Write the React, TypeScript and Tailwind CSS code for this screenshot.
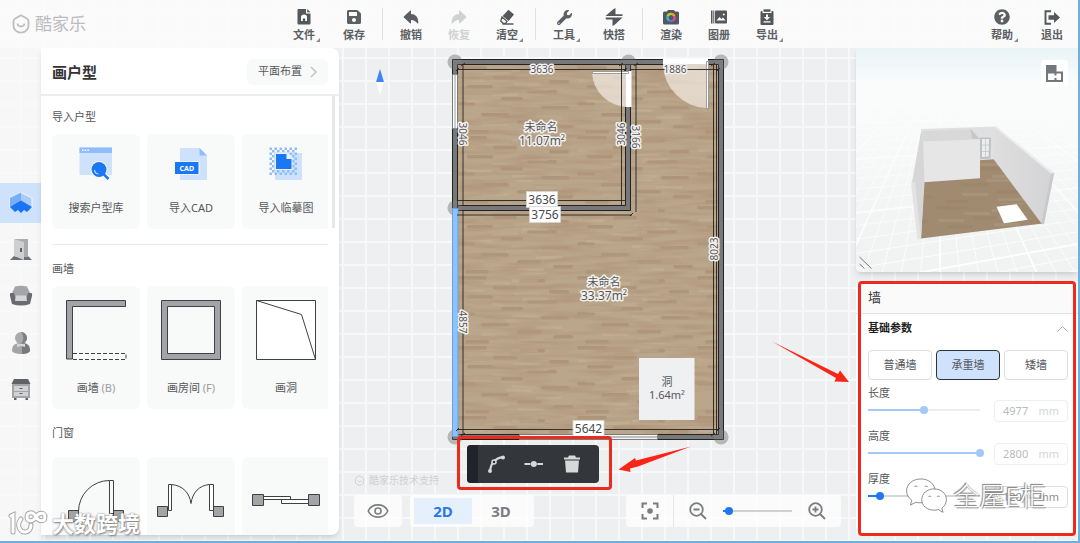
import React, { useState } from 'react';
import { FaSave, FaWrench, FaQuestionCircle } from 'react-icons/fa';
import { IoArrowRedo, IoArrowUndo } from 'react-icons/io5';

const dark = '#54575b';

interface ToolProps {
	label: string;
	icon: React.ReactNode;
	menu?: boolean;
	disabled?: boolean;
}

const ToolButton = ({ label, icon, menu, disabled }: ToolProps) => {
	return (
		<button
			type="button"
			disabled={disabled}
			className="relative flex h-12 w-12 flex-col items-center pt-2 text-[#5c5f63] disabled:text-[#d0d1d3]"
		>
			<span className="flex h-[18px] items-center justify-center">{icon}</span>
			<span className="mt-px text-[11px] leading-[16px] font-semibold">{label}</span>
			{menu && (
				<svg className="absolute right-2 bottom-1.5" width="4" height="4" viewBox="0 0 4 4">
					<path d="M4 0v4H0z" fill="#8b8d90" />
				</svg>
			)}
		</button>
	);
};

const Separator = () => <span className="mx-1 h-8 w-px bg-[#dfe0e2]" />;

const FileIcon = () => (
	<svg width="14" height="16" viewBox="0 0 14 16">
		<path d="M1.500 0H9v4.500h4.500V14.500a1 1 0 0 1-1 1h-11a1 1 0 0 1-1-1V1a1 1 0 0 1 1-1z" fill={dark} />
		<path d="M10.200 0l3.300 3.300h-3.300z" fill={dark} />
		<path d="M4 12V8.500a3 3 0 0 1 6 0V12H8.200V9.500H5.800V12z" fill="#fff" />
	</svg>
);

const EraserIcon = () => (
	<svg width="17" height="17" viewBox="0 0 17 17">
		<path d="M9.500 .8l5.500 4.800-5.400 6.400-6-5z" fill={dark} />
		<path d="M3 8l5 4.300-1.500 2H4L1.800 12z" fill="none" stroke={dark} strokeWidth="1.300" />
		<path d="M3.500 15h11" stroke={dark} strokeWidth="1.500" />
	</svg>
);

const QuickIcon = () => (
	<svg width="18" height="18" viewBox="0 0 18 18" fill={dark}>
		<path d="M10.500 0v6.300h7L17.500 8H.5L8 1.500z" />
		<path d="M.5 9.500h17L10 16.500 7.500 18v-6.500H1z" />
	</svg>
);

const RenderIcon = () => (
	<svg width="16" height="15" viewBox="0 0 16 15">
		<path d="M4 1.500L5 0h6l1 1.500h2.500a1.500 1.500 0 0 1 1.500 1.500v10a1.500 1.500 0 0 1-1.500 1.500h-13A1.500 1.500 0 0 1 0 13V3a1.500 1.500 0 0 1 1.500-1.500z" fill={dark} />
		<g fill="none" strokeWidth="2.200">
			<path d="M8 3.900a3.600 3.600 0 0 1 3.400 2.400" stroke="#f0a030" />
			<path d="M11.400 6.300a3.600 3.600 0 0 1-1.200 4.100" stroke="#e84a8a" />
			<path d="M10.200 10.400a3.600 3.600 0 0 1-4.300 0" stroke="#6a6af0" />
			<path d="M5.900 10.400a3.600 3.600 0 0 1-1.300-4" stroke="#2cc3d8" />
			<path d="M4.600 6.400A3.600 3.600 0 0 1 8 3.900" stroke="#a5d838" />
		</g>
	</svg>
);

const AlbumIcon = () => (
	<svg width="16" height="14" viewBox="0 0 16 14">
		<path d="M0 .5h1.500v13H0zM2.300.5h1v13h-1z" fill={dark} />
		<rect x="4" y=".5" width="12" height="13" rx="1" fill={dark} />
		<path d="M5.500 10.500l3-3.500 2 2 1.500-1.500 2.500 3z" fill="#fff" />
		<circle cx="12.800" cy="4.500" r="1" fill="#fff" />
	</svg>
);

const ExportIcon = () => (
	<svg width="14" height="16" viewBox="0 0 14 16">
		<rect x=".5" y="2" width="13" height="14" rx="1" fill={dark} />
		<rect x="2.500" y="0" width="9" height="4" fill="#fff" />
		<rect x="3.500" y=".3" width="7" height="2.500" fill={dark} />
		<path d="M6 5.500h2V8h2.300L7 11.200 3.700 8H6zM3.500 12.300h7v1.200h-7z" fill="#fff" />
	</svg>
);

const ExitIcon = () => (
	<svg width="16" height="15" viewBox="0 0 16 15">
		<path d="M7 1.200H1.500v12.600H7" fill="none" stroke={dark} strokeWidth="1.900" />
		<path d="M4.500 5.300H10V2l6 5.500-6 5.500V9.700H4.500z" fill={dark} />
	</svg>
);

const LogoMark = ({ size }: { size: number }) => (
	<svg width={size} height={size} viewBox="0 0 20 20" fill="none" stroke="currentColor" strokeWidth="1.800">
		<path d="M10 1.300l5.800 3.200a3 3 0 0 1 1.700 2.700v4.600c0 3.800-3.600 6.900-7.500 6.900s-7.500-3.100-7.500-6.900V7.200a3 3 0 0 1 1.700-2.700z" />
		<path d="M6.500 9.500c.5 4 6.500 4 7 0" />
	</svg>
);

const Header = () => {
	return (
		<header className="flex h-12 shrink-0 items-center bg-[#fbfbfb]/85 pr-0.5">
			<div className="flex w-[280px] shrink-0 items-center gap-1 pl-[11px] text-[#bcbdbf]">
				<LogoMark size={20} />
				<span className="text-[17px] leading-[24px]">酷家乐</span>
			</div>
			<nav className="flex items-center">
				<ToolButton label="文件" icon={<FileIcon />} menu />
				<span className="w-0.5" />
				<ToolButton label="保存" icon={<FaSave size={16} />} />
				<Separator />
				<ToolButton label="撤销" icon={<IoArrowUndo size={18} />} />
				<ToolButton label="恢复" icon={<IoArrowRedo size={18} />} disabled />
				<ToolButton label="清空" icon={<EraserIcon />} menu />
				<Separator />
				<ToolButton label="工具" icon={<FaWrench size={15} />} menu />
				<span className="w-0.5" />
				<ToolButton label="快搭" icon={<QuickIcon />} />
				<Separator />
				<ToolButton label="渲染" icon={<RenderIcon />} />
				<ToolButton label="图册" icon={<AlbumIcon />} />
				<ToolButton label="导出" icon={<ExportIcon />} menu />
			</nav>
			<nav className="ml-auto flex items-center gap-0.5">
				<ToolButton label="帮助" icon={<FaQuestionCircle size={16} />} menu />
				<ToolButton label="退出" icon={<ExitIcon />} />
			</nav>
		</header>
	);
};

const railIcons = [
	{
		name: '户型',
		art: (
			<>
				<path d="M12 1.500L23 7v10L12 11.500 1 17V7z" fill="#a9cbfa" stroke="#eef5ff" strokeWidth="1" />
				<path d="M12 1.500L1 7v9.500l11-6z" fill="#79aef7" />
				<path d="M12 9.500l11 6.500-5 5-3-2-3 3-3-3-3 2-5-5z" fill="#1b74f2" />
			</>
		),
	},
	{
		name: '门',
		art: (
			<>
				<path d="M1 22l4-4h14l4 4z" fill="#6d6f72" />
				<path d="M6 1h13v18H6z" fill="#a9abad" />
				<path d="M5 1l10 3v18L5 18z" fill="#cdcfd1" />
				<path d="M11 10h2v4h-2z" fill="#5f6164" />
			</>
		),
	},
	{
		name: '家具',
		art: (
			<>
				<path d="M6 2.500Q12 1 18 2.500L21 9H3z" fill="#a3a5a8" />
				<path d="M5 8h14v10H5z" fill="#a3a5a8" />
				<path d="M1.500 9H5l2 8h10l2-8h3.500q1 1 .5 3l-2 8q-9 3-18 0l-2-8q-.5-2 .5-3z" fill="#696b6f" />
				<path d="M7 11.500h10l1 5.500H6z" fill="#d3d5d7" />
			</>
		),
	},
	{
		name: '人物',
		art: (
			<>
				<path d="M3 20c0-6 3-8 9-8s9 2 9 8c-2 4-16 4-18 0z" fill="#a3a5a8" />
				<path d="M13 12c6 0 8 3 8 8-1 2-4 3-8 3z" fill="#77797c" />
				<circle cx="12" cy="7" r="6" fill="#a9abad" />
				<path d="M12 1a6 6 0 0 1 0 12c3-4 3-8 0-12z" fill="#7d7f82" />
				<path d="M8 13h8v3l-4-1-4 1z" fill="#d3d5d7" />
			</>
		),
	},
	{
		name: '柜子',
		art: (
			<>
				<path d="M5 2h14l2.500 5h-19z" fill="#606266" />
				<path d="M3 7h18v14H3z" fill="#a3a5a8" />
				<path d="M5 9h14v5H5zM5 15h14v4H5z" fill="#d0d2d4" />
				<path d="M10.500 11h3v1h-3zM10.500 16h3v1h-3zM5 21h2.500v2H5zM16.500 21H19v2h-2.500z" fill="#606266" />
			</>
		),
	},
];

const Rail = () => {
	return (
		<aside className="w-[41px] shrink-0 bg-[#f9f9fa]/80 pt-[135px]">
			<div className="flex h-[226px] flex-col justify-between">
				{railIcons.map(({ name, art }, index) => (
					<button
						key={name}
						type="button"
						aria-label={name}
						className={
							index === 0
								? 'flex h-10 items-center justify-center bg-[#cfe2fc]'
								: 'flex h-10 items-center justify-center'
						}
					>
						<svg width="24" height="24" viewBox="0 0 24 24">
							{art}
						</svg>
					</button>
				))}
			</div>
		</aside>
	);
};

interface CardProps {
	label: string;
	hint?: string;
	tall?: boolean;
	hideLabel?: boolean;
	viewBox: string;
	children: React.ReactNode;
}

const Card = ({ label, hint, tall, hideLabel, viewBox, children }: CardProps) => {
	return (
		<button
			type="button"
			aria-label={label}
			className={
				tall
					? 'flex h-[123px] w-[88px] shrink-0 flex-col items-center rounded-md bg-[#f8f9f9] pt-2.5'
					: 'flex h-[95px] w-[88px] shrink-0 flex-col items-center rounded-md bg-[#f8f9f9] pt-2'
			}
		>
			<svg viewBox={viewBox} className={tall ? 'h-[68px] w-[88px]' : 'size-11'}>
				{children}
			</svg>
			{!hideLabel && (
				<span className={tall ? 'mt-4 text-[11px] leading-[16px]' : 'mt-[14px] text-[11px] leading-[16px]'}>
					{label}
					{hint && <span className="text-[#9a9c9f]"> ({hint})</span>}
				</span>
			)}
		</button>
	);
};

const checker = Array.from({ length: 11 }).flatMap((_, row) =>
	Array.from({ length: 11 })
		.map((_, col) => ({ row, col }))
		.filter(({ row, col }) => (row + col) % 2 === 0)
);

const SidePanel = () => {
	const wall = { fill: '#a3a4a8', stroke: '#3f4144', strokeWidth: 1 };
	const outline = { fill: 'none', stroke: '#3f4144', strokeWidth: 1 };

	return (
		<section className="mb-1.5 flex w-[298px] shrink-0 flex-col overflow-hidden rounded-r-lg bg-white text-[#55575a] shadow-md">
			<div className="flex h-12 shrink-0 items-center justify-between border-b-2 border-[#eceded] pt-px pr-[11px] pl-[11px]">
				<h1 className="text-[15px] leading-[22px] font-bold text-[#333]">画户型</h1>
				<button
					type="button"
					className="flex h-[26px] items-center gap-2 rounded-md bg-[#f8f9f9] px-[11px] text-[11px]"
				>
					平面布置
					<svg width="7" height="12" viewBox="0 0 7 12" fill="none" stroke="#c3c4c6" strokeWidth="1.500">
						<path d="M1 1l5 5-5 5" />
					</svg>
				</button>
			</div>
			<div className="relative min-h-0 flex-1 overflow-hidden px-[11px] pt-[13px]">
				<span className="absolute top-0 right-1 h-33 w-[3px] bg-[#e6e8e8]" />
				<h2 className="text-[11px] leading-[16px]">导入户型</h2>
				<div className="mt-[9px] flex gap-[7px] overflow-hidden">
					<Card label="搜索户型库" viewBox="74 142 44 44">
						<rect x="79.500" y="147.500" width="32.500" height="27.500" rx="1" fill="#cfe2fd" />
						<path d="M79.500 147.500H112v5.500H79.500z" fill="#8fbdf9" />
						<path d="M82 149.500h1.500v1.500H82zm2.700 0h1.500v1.500h-1.500zm2.700 0h1.500v1.500h-1.500z" fill="#fff" />
						<path d="M103 173l5.500 6" stroke="#f8f9f9" strokeWidth="5" />
						<circle cx="99" cy="169.500" r="8.500" fill="#f8f9f9" />
						<circle cx="99" cy="169.500" r="7.500" fill="#1a78f5" />
						<path d="M103 173.500l5.500 5.500" stroke="#1a78f5" strokeWidth="2.500" />
						<path d="M94.500 170a4.500 4.500 0 0 0 4 4" fill="none" stroke="#cfe2fd" strokeWidth="1.200" />
					</Card>
					<Card label="导入CAD" viewBox="169 142 44 44">
						<path d="M180 148h19.500l7.500 7.500V180h-27z" fill="#cfe2fd" />
						<path d="M199.500 148v7.500h7.500z" fill="#8fbdf9" />
						<rect x="174.500" y="161.500" width="25" height="13" fill="#fff" />
						<rect x="175" y="162" width="23.500" height="12" fill="#1a78f5" />
						<text x="186.800" y="170.700" textAnchor="middle" fontSize="7" fontWeight="700" fill="#fff">
							CAD
						</text>
					</Card>
					<Card label="导入临摹图" viewBox="264 142 44 44">
						<path d="M275 153h27v27h-27z" fill="#cfe2fd" />
						{checker.map(({ row, col }) => (
							<rect key={`${row}-${col}`} x={269.5 + col * 2.5} y={147.5 + row * 2.5} width="2.500" height="2.500" fill="#8fbdf9" />
						))}
						<path d="M275 152.500h13l4.500 4.500v13H275z" fill="#e6f0fe" />
						<path d="M276 154h10.500v5h5v10H276z" fill="#1a78f5" />
					</Card>
				</div>
				<hr className="mt-[15px] border-[#e9eaea]" />
				<h2 className="mt-4 text-[11px] leading-[16px]">画墙</h2>
				<div className="mt-[9px] flex gap-[7px] overflow-hidden">
					<Card label="画墙" hint="B" tall viewBox="52 296 88 68">
						<path d="M66.500 300.500h59v6h-53v52.500h-6z" {...wall} />
						<path d="M73 353.500h53v6H73" {...outline} strokeDasharray="4 2" />
					</Card>
					<Card label="画房间" hint="F" tall viewBox="147 296 88 68">
						<path d="M161.500 300.500h59v59h-59z" {...wall} />
						<path d="M167.500 306.500h47v47h-47z" fill="#f8f9f9" stroke="#3f4144" />
					</Card>
					<Card label="画洞" tall viewBox="242 296 88 68">
						<path d="M256.500 300.500h59v59h-59z" fill="#fff" stroke="#3f4144" />
						<path d="M256.500 300.500l45 14 14 45" {...outline} />
					</Card>
				</div>
				<h2 className="mt-4 text-[11px] leading-[16px]">门窗</h2>
				<div className="mt-4 flex gap-[7px] overflow-hidden">
					<Card label="单开门" hideLabel tall viewBox="52 468 88 68">
						<path d="M68.500 511.500h10v11h-10zM113.500 511.500h10v11h-10z" {...wall} />
						<path d="M109.500 481.500h4v33h-4zM109.500 481.500a31 31 0 0 0-31 31" {...outline} />
					</Card>
					<Card label="双开门" hideLabel tall viewBox="147 468 88 68">
						<path d="M157.500 507.500h10v10h-10zM213.500 507.500h10v10h-10z" {...wall} />
						<path d="M168.500 485.500h3v26h-3zM209.500 485.500h4v26h-4z" fill="#fff" stroke="#3f4144" />
						<path d="M171.500 485.500c11 1 18 8 19.500 19 1.500-11 8-18 18.500-19" {...outline} />
					</Card>
					<Card label="推拉门" hideLabel tall viewBox="242 468 88 68">
						<path d="M263.500 497.500h27v3h-27zM281.500 500.500h28v4h-28z" fill="#fff" stroke="#3f4144" />
						<path d="M252.500 495.500h11v11h-11zM308.500 495.500h11v11h-11z" {...wall} />
					</Card>
				</div>
			</div>
		</section>
	);
};

const planks = [
	[0, 2, 30],
	[62, 5, 26],
	[36, 12, 24],
	[92, 16, 20],
	[10, 21, 26],
	[70, 26, 30],
	[44, 33, 22],
	[0, 38, 18],
	[84, 42, 28],
	[24, 49, 28],
	[60, 56, 24],
	[96, 61, 20],
	[8, 66, 24],
];

const halo = {
	stroke: '#f3f1ee',
	strokeWidth: 3,
	paintOrder: 'stroke',
	fill: '#55575a',
	textAnchor: 'middle' as const,
	strokeLinejoin: 'round' as const,
};

const nodes = [
	[455, 62],
	[628.5, 62],
	[721, 62],
	[455, 208],
	[455, 437],
	[721, 437],
];

const verticalDims = [
	{ x: 463, y: 134, value: '3046', turn: 90 },
	{ x: 621, y: 134, value: '3046', turn: -90 },
	{ x: 636, y: 137, value: '3166', turn: 90 },
	{ x: 714, y: 249, value: '8023', turn: -90 },
	{ x: 463, y: 322, value: '4857', turn: 90 },
];

const FloorPlan = () => {
	return (
		<svg className="absolute inset-0 h-full w-full" viewBox="339 48 517 493">
			<defs>
				<pattern id="planks" x="457" y="64" width="120" height="70" patternUnits="userSpaceOnUse">
					{planks.map(([x, y, w]) => (
						<rect key={`${x}-${y}`} x={x} y={y} width={w} height="3.500" rx="1.500" fill="#8a5f42" opacity=".26" />
					))}
					{planks.map(([x, y]) => (
						<rect key={`${x}-${y}`} x={(x + 55) % 90} y={y + 3} width="26" height="3" fill="#c9b89c" opacity=".35" />
					))}
				</pattern>
				<filter id="grain" x="0" y="0" width="100%" height="100%">
					<feTurbulence type="fractalNoise" baseFrequency="0.022 0.2" numOctaves="2" seed="4" />
					<feColorMatrix values="0 0 0 0 0.44  0 0 0 0 0.31  0 0 0 0 0.2  2.200 0 0 0 -0.850" />
				</filter>
			</defs>

			{nodes.map(([cx, cy]) => (
				<circle key={`${cx}-${cy}`} cx={cx} cy={cy} r="7.500" fill="#c6c7c9" />
			))}

			<rect x="457" y="64" width="262" height="371" fill="#baa68b" />
			<rect x="457" y="64" width="262" height="371" fill="url(#planks)" />
			<rect x="457" y="64" width="262" height="371" filter="url(#grain)" />

			{/* walls */}
			<g fill="#77787a" stroke="#222" strokeWidth="1">
				<path d="M452.500 59.500h271v380h-271zM457.500 64.500v370h261v-370z" fillRule="evenodd" />
				<path d="M457.500 205.500h168v-141h5v146h-173z" />
			</g>
			{nodes.map(([cx, cy]) => (
				<circle key={`${cx}-${cy}`} cx={cx} cy={cy} r="7.500" fill="#888" opacity=".25" />
			))}

			{/* doors and windows */}
			<path d="M592 72a36 36 0 0 0 36 35V72z" fill="#f4ece4" opacity=".7" />
			<path d="M663 64a45 45 0 0 0 44 44V64z" fill="#f4ece4" opacity=".7" />
			<path d="M625.500 71h6v36h-6zM663 59h45v5.500h-45z" fill="#fff" />
			<path d="M592.500 71.500h36v2h-36zM706.500 61.500h2v47h-2z" fill="#fff" stroke="#8a8b8d" strokeWidth=".8" />
			<rect x="452.500" y="74.500" width="5" height="54" fill="#fff" stroke="#777" strokeWidth=".8" />
			<path d="M455 74v55" stroke="#999" />
			<rect x="519.500" y="434.500" width="138" height="5" fill="#f5f5f5" stroke="#777" strokeWidth=".8" />
			<path d="M519 437h138" stroke="#888" />
			<rect x="452.500" y="208.500" width="5.500" height="228" fill="#8ec2fd" stroke="#64a2ea" />

			{/* dimension lines */}
			<g fill="none" stroke="#222" strokeWidth=".9">
				<path d="M457 69.500h169M463 64v141M457 200.500h169M621.500 64v141" />
				<path d="M631 69.500h88M636 64v148M457 215h175M463 210v225M713.500 64v371M457 429.500h262M716.500 64v371" />
				<path d="M456 71l3-3M461 66l4-3M619 66l4-3M624 71l3-3M634 66l4-3M711 66l4-3M717 71l3-3M630 216l3-3M456 431l3-3M717 431l3-3M711 436l4-3M461 436l4-3" />
			</g>

			<rect x="639" y="358" width="55.500" height="62" fill="#eff0f2" />

			<g fontSize="10">
				<text x="542" y="73" {...halo}>
					3636
				</text>
				<text x="675" y="73" {...halo}>
					1886
				</text>
				{verticalDims.map(({ x, y, value, turn }) => (
					<text key={`${x}-${y}`} transform={`translate(${x} ${y}) rotate(${turn})`} y="4" {...halo}>
						{value}
					</text>
				))}
			</g>
			<text x="541" y="131" fontSize="11" {...halo}>
				未命名
			</text>
			<text x="542" y="145" fontSize="12" {...halo}>
				11.07m²
			</text>
			<text x="604" y="286" fontSize="11" {...halo}>
				未命名
			</text>
			<text x="604" y="300" fontSize="12" {...halo}>
				33.37m²
			</text>
			<g fill="#55575a" textAnchor="middle">
				<text x="667" y="386" fontSize="11">
					洞
				</text>
				<text x="667" y="399" fontSize="11">
					1.64m²
				</text>
			</g>

			{[
				{ x: 542, y: 200, value: '3636' },
				{ x: 545, y: 215, value: '3756' },
				{ x: 588.5, y: 429, value: '5642' },
			].map(({ x, y, value }) => (
				<g key={value}>
					<rect x={x - 15.5} y={y - 8.5} width="31" height="16" fill="#fff" stroke="#d5d5d5" strokeWidth=".8" />
					<text x={x} y={y + 4} fontSize="12" textAnchor="middle" fill="#4a4c4f">
						{value}
					</text>
				</g>
			))}

			{/* compass */}
			<path d="M380 69l4 13h-8z" fill="#3e86f5" />
			<path d="M376 82h8l-4 13z" fill="#fff" />

			{/* callout arrows */}
			<g fill="#fb2517">
				<path d="M691 446.500l-55 14-1-2.500-16.500 11.500 12 2.500-.5-3.500 8-2z" />
				<path d="M772 341.500l66 32.500 2-3.500 9 11.500-14.500-.500 1.500-3.500z" />
			</g>
		</svg>
	);
};

const sliderBase =
	'h-2.5 appearance-none bg-transparent bg-[length:calc(100%_-_8px)_2px] bg-center bg-no-repeat [&::-webkit-slider-thumb]:size-2 [&::-webkit-slider-thumb]:appearance-none [&::-webkit-slider-thumb]:rounded-full';

const trackFill = (value: number, color: string, rest: string) => ({
	backgroundImage: `linear-gradient(to right, ${color} ${value}%, ${rest} ${value}%)`,
});

const Workspace = () => {
	const [mode, setMode] = useState('2D');
	const [zoom, setZoom] = useState(8);

	return (
		<main className="relative flex min-w-0 flex-1 flex-col justify-end px-[15px] pb-3.5">
			<FloorPlan />

			<div className="absolute top-[388px] left-[118px] rounded-sm border-[3px] border-[#ee2a1c] pt-1.5 pr-2.5 pb-1 pl-[7px]">
				<div className="flex h-[38px] items-center gap-3.5 overflow-hidden rounded bg-[#33373c] pr-[15px]">
					<span className="h-full w-[11px] bg-[#20242a]" />
					<button type="button" aria-label="弧形" className="-ml-2">
						<svg width="24" height="22" viewBox="0 0 24 22" fill="none" stroke="#d7d8da" strokeWidth="2">
							<path d="M6 18C7 9 12 5 19 4" />
							<circle cx="6" cy="18" r="1" />
							<circle cx="10" cy="9" r="2" fill="#33373c" strokeWidth="1.500" />
							<circle cx="19" cy="4.500" r="1" />
						</svg>
					</button>
					<button type="button" aria-label="拆分">
						<svg width="24" height="22" viewBox="0 0 24 22" fill="#d7d8da">
							<path d="M2.500 10h5.500v2H2.500zM15.500 10H21v2h-5.500z" />
							<circle cx="11.800" cy="11" r="3" />
							<path d="M7 10.500h10v1H7z" />
						</svg>
					</button>
					<button type="button" aria-label="删除">
						<svg width="24" height="22" viewBox="0 0 24 22" fill="#d7d8da">
							<path d="M4 4.500h4l1-2h6l1 2h4v2H4zM5 7.500h14L18 19.500H6z" />
						</svg>
					</button>
				</div>
			</div>

			<div className="relative flex items-center gap-1 pb-2 text-[10px] leading-[14px] text-[#cfd0d2]">
				<LogoMark size={11} />
				酷家乐技术支持
			</div>
			<div className="relative flex h-8 items-center">
				<button type="button" aria-label="显示" className="flex h-8 w-12 items-center justify-center rounded bg-white/75">
					<svg width="22" height="16" viewBox="0 0 22 16" fill="none" stroke="#7b7d80" strokeWidth="1.600">
						<path d="M1.200 8C5 -.2 17 -.2 20.800 8 17 16.200 5 16.200 1.200 8z" />
						<circle cx="11" cy="8" r="3" />
					</svg>
				</button>
				<div className="ml-2 flex h-8 items-center rounded bg-white/75 px-1">
					{['2D', '3D'].map((name) => (
						<button
							key={name}
							type="button"
							onClick={() => setMode(name)}
							className={
								mode === name
									? 'h-[26px] w-[58px] bg-[#e6f0fd] text-[15px] leading-[26px] font-bold text-[#2878e8]'
									: 'h-[26px] w-[58px] text-[15px] leading-[26px] font-bold text-[#7b7d80]'
							}
						>
							{name}
						</button>
					))}
				</div>
				<div className="ml-auto flex h-8 items-center rounded bg-white/75">
					<button type="button" aria-label="居中" className="flex h-8 w-12 items-center justify-center border-r border-[#e6e7e8]">
						<svg width="18" height="18" viewBox="0 0 18 18" fill="none" stroke="#7b7d80" strokeWidth="2">
							<path d="M1.500 6V1.500H6M12 1.500h4.500V6M16.500 12v4.500H12M6 16.500H1.500V12" />
							<circle cx="9" cy="9" r="2.800" fill="#7b7d80" stroke="none" />
						</svg>
					</button>
					<div className="flex items-center gap-3 px-[15px]">
						<button type="button" aria-label="缩小">
							<svg width="18" height="18" viewBox="0 0 18 18" fill="none" stroke="#7b7d80" strokeWidth="1.800">
								<circle cx="7.500" cy="7.500" r="6.300" />
								<path d="M12 12l5 5M4.500 7.500h6" />
							</svg>
						</button>
						<input
							type="range"
							aria-label="缩放"
							value={zoom}
							onChange={(e) => setZoom(Number(e.target.value))}
							className={`${sliderBase} w-[77px] [&::-webkit-slider-thumb]:bg-[#1f78f0]`}
							style={trackFill(zoom, '#1f78f0', '#cfd0d2')}
						/>
						<button type="button" aria-label="放大">
							<svg width="18" height="18" viewBox="0 0 18 18" fill="none" stroke="#7b7d80" strokeWidth="1.800">
								<circle cx="7.500" cy="7.500" r="6.300" />
								<path d="M12 12l5 5M4.500 7.500h6M7.500 4.500v6" />
							</svg>
						</button>
					</div>
				</div>
			</div>
		</main>
	);
};

// ground grid of the preview, two families of lines running to their vanishing points
const depthLines = Array.from({ length: 70 }).map((_, index) => 240 + index * 20);
const crossLines = Array.from({ length: 34 }).map((_, index) => 104 + index * index * 0.35 + index * 2);

const Preview = () => {
	return (
		<div className="relative overflow-hidden rounded-l bg-[#f1f3f3] shadow-md">
			<svg className="block w-full" viewBox="856 48 222 224">
				<defs>
					<linearGradient id="sky" x1="0" y1="0" x2="0" y2="1">
						<stop offset="0" stopColor="#e9f3f6" />
						<stop offset=".16" stopColor="#fafcfc" />
						<stop offset=".5" stopColor="#f9fafa" stopOpacity=".7" />
						<stop offset="1" stopColor="#f1f3f3" stopOpacity="0" />
					</linearGradient>
					<linearGradient id="side" x1="0" y1="0" x2="1" y2="0">
						<stop offset="0" stopColor="#dededf" />
						<stop offset="1" stopColor="#d4d4d6" />
					</linearGradient>
				</defs>
				<g stroke="#fff" fill="none">
					{depthLines.map((x, index) => (
						<path key={x} d={`M940 60L${x} 280`} strokeWidth={index % 5 === 0 ? 1.8 : 0.8} />
					))}
					{crossLines.map((y, index) => (
						<path key={y} d={`M856 ${y}L1900 96`} strokeWidth={index % 5 === 0 ? 1.8 : 0.8} />
					))}
				</g>
				<rect x="856" y="48" width="222" height="224" fill="url(#sky)" />

				<path d="M924 181l56-4v-18l14-.500 49 65-122 15z" fill="#a08b71" />
				<path d="M924 181l56-4v-18l14-.500 49 65-122 15z" fill="url(#planks)" opacity=".5" />
				<path d="M921.500 129l74.500-2.500 2 32.500-74 5z" fill="#e0e0e1" />
				<path d="M923 131l49-1.500 1 15-50 1z" fill="#d8d8d9" />
				<path d="M970.500 128.500l9.500 11-8-1z" fill="#c6c6c8" />
				<path d="M979.500 137.500h11.500l-.500 21-10.500.700z" fill="#bfc1c4" />
				<path d="M982 139h7l-.400 17.500-6.600.500z" fill="#eceded" />
				<path d="M982 145h7M982 151.500h7M985.500 139v17" stroke="#c4c6c9" strokeWidth=".8" />
				<path d="M922.500 141.500l57.500-2.300v39l-56 4z" fill="#e6e6e7" />
				<path d="M921.500 129l1.500 12.500 1.500 41-3.500 56-9-56z" fill="#d6d6d7" />
				<path d="M911 183l4-1.500 6 57-3.500 1.500z" fill="#e3e3e4" />
				<path d="M996 126.500l56 46-10.500 51L993.500 159z" fill="url(#side)" />
				<path d="M996 126.500l58 46-2.500 1.500-56-46z" fill="#ececed" />
				<path d="M1051 174l3.300-1.500-10.300 52-2.800-1z" fill="#c9c9cb" />
				<path d="M996.500 206.700l20.200-2.400 11 15.400-23.700 3.600z" fill="#fff" />

				<path d="M859.500 257l12 11.500M859.500 264l5 4.500" stroke="#777" strokeWidth="1" />
			</svg>
			<button
				type="button"
				aria-label="切换视图"
				className="absolute top-3 right-2.5 flex size-[27px] items-center justify-center rounded bg-white"
			>
				<svg width="17" height="17" viewBox="0 0 17 17" fill="#74777b">
					<path d="M0 0h10.500v6.500H17V17H0z" />
					<path d="M2 8.500h6.500v2h2v-2H15V15h-4.500v-2h-2v2H2z" fill="#fff" />
				</svg>
			</button>
		</div>
	);
};

interface ParamProps {
	id: string;
	label: string;
	size: string;
	initial: number;
	locked?: boolean;
}

const Param = ({ id, label, size, initial, locked }: ParamProps) => {
	const [position, setPosition] = useState(initial);
	const [amount, setAmount] = useState(size);

	return (
		<div className="flex h-[43px] items-start justify-between">
			<div>
				<label htmlFor={id} className="block text-[11px] leading-[16px] text-[#55575a]">
					{label}
				</label>
				<input
					id={id}
					type="range"
					value={position}
					disabled={locked}
					onChange={(e) => setPosition(Number(e.target.value))}
					className={
						locked
							? `${sliderBase} -ml-1 block w-[120px] mt-1 [&::-webkit-slider-thumb]:bg-[#a3c9fb]`
							: `${sliderBase} -ml-1 block w-[120px] mt-1 [&::-webkit-slider-thumb]:bg-[#1f78f0]`
					}
					style={trackFill(position, locked ? '#a3c9fb' : '#1f78f0', locked ? '#ececed' : '#d5d6d8')}
				/>
			</div>
			<div
				className={
					locked
						? 'mt-[15px] flex h-[22px] w-[74px] items-center justify-between rounded-sm border border-[#efefef] px-2 text-[11px] text-[#b9babc]'
						: 'mt-[15px] flex h-[22px] w-[74px] items-center justify-between rounded-sm border border-[#dcdddf] px-2 text-[11px] text-[#8d8f92]'
				}
			>
				<input
					type="text"
					aria-label={`${label}数值`}
					value={amount}
					disabled={locked}
					onChange={(e) => setAmount(e.target.value)}
					className="w-8 bg-transparent"
				/>
				<span className={locked ? 'text-[#d5d6d8]' : ''}>mm</span>
			</div>
		</div>
	);
};

const Properties = () => {
	const [kind, setKind] = useState('承重墙');

	return (
		<div className="relative mt-[11px] mb-[7px] flex-1 bg-white">
			<div className="flex h-[31px] items-center border-b border-[#e3e4e5] bg-[#fafafa] pl-3 text-[13px] text-[#333]">墙</div>
			<div className="pr-2.5 pl-3">
				<button type="button" className="flex h-7 w-full items-center justify-between pt-px text-[11px] font-bold text-[#222]">
					基础参数
					<svg width="11" height="6" viewBox="0 0 11 6" fill="none" stroke="#a9abad">
						<path d="M.5 5.500l5-5 5 5" />
					</svg>
				</button>
				<div className="mt-2 grid grid-cols-3 gap-1 text-[11px] text-[#55575a]">
					{['普通墙', '承重墙', '矮墙'].map((name) => (
						<button
							key={name}
							type="button"
							onClick={() => setKind(name)}
							className={
								kind === name
									? 'h-[30px] rounded border border-[#2d3138] bg-[#cfe2fd]'
									: 'h-[30px] rounded border border-[#dcdddf] bg-white'
							}
						>
							{name}
						</button>
					))}
				</div>
				<div className="mt-[5px]">
					<Param id="length" label="长度" size="4977" initial={50} locked />
					<Param id="height" label="高度" size="2800" initial={100} locked />
					<Param id="thickness" label="厚度" size="120" initial={11} />
				</div>
			</div>
			<span className="pointer-events-none absolute -inset-y-0.5 inset-x-0.5 rounded-sm border-[3px] border-[#ee2a1c]" />

			<div className="pointer-events-none absolute right-8 bottom-5 flex items-center gap-1.5">
				<svg width="43" height="36" viewBox="0 0 44 38" fill="#fff" stroke="#888" strokeWidth="1">
					<path d="M16 1C7.500 1 1 6.500 1 13.500c0 4 2 7.500 5.500 10L5 28.500l6-3c1.600.5 3.300.7 5 .7 8.500 0 15-5.500 15-12.600S24.500 1 16 1z" />
					<path d="M30 11.500c-7.500 0-13 5-13 11.300S22.500 34 30 34c1.600 0 3-.2 4.500-.7l5 3-1.300-4.600c3-2 4.800-5.200 4.800-8.900 0-6.300-5.500-11.300-13-11.300z" />
					<path d="M9 9.500a2 2 0 0 1 3.500 0M20 9.500a2 2 0 0 1 3.500 0M24 20a1.700 1.700 0 0 1 3 0M33 20a1.700 1.700 0 0 1 3 0" fill="none" />
				</svg>
				<span className="text-[26px] leading-[30px] font-light text-white [text-shadow:-1px_-1px_1px_#777,1px_1px_1px_#888]">
					全屋E柜
				</span>
			</div>
		</div>
	);
};

const App = () => {
	return (
		<div className="relative flex h-screen flex-col overflow-hidden border-r-2 border-b-2 border-[#6fb0e2] bg-[#eeeff1] bg-[linear-gradient(to_right,#f7f8f9_2px,transparent_2px),linear-gradient(to_bottom,#f7f8f9_2px,transparent_2px)] bg-[size:23px_23px] bg-[position:20px_11px] font-['Noto_Sans','Noto_Sans_CJK_SC',sans-serif]">
			<Header />
			<div className="flex min-h-0 flex-1">
				<Rail />
				<SidePanel />
				<Workspace />
				<div className="flex w-[222px] shrink-0 flex-col">
					<Preview />
					<Properties />
				</div>
			</div>

			<div className="pointer-events-none absolute bottom-1 left-2 flex items-center gap-1">
				<svg width="40" height="28" viewBox="0 0 40 28" fill="none" strokeLinecap="round">
					<g stroke="#a5a7a9" strokeWidth="5">
						<path d="M3 7l2-1v17M13 10c-5 6-1 14 5 13 4-1 5-4 5-7" />
						<path d="M28 8c-3-6-9-5-9 0s6 5 9 0 9-5 9 0-6 5-9 0z" />
					</g>
					<g stroke="#fff" strokeWidth="3">
						<path d="M3 7l2-1v17M13 10c-5 6-1 14 5 13 4-1 5-4 5-7" />
						<path d="M28 8c-3-6-9-5-9 0s6 5 9 0 9-5 9 0-6 5-9 0z" />
					</g>
				</svg>
				<span className="text-[22px] leading-[26px] font-bold text-white [text-shadow:0_0_2px_#777,1px_1px_2px_#888]">
					大数跨境
				</span>
			</div>
		</div>
	);
};

export default App;
